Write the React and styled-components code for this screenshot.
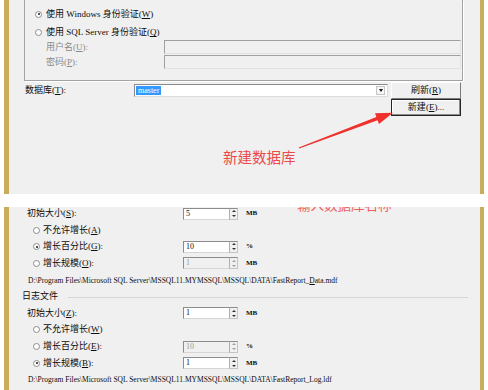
import React from 'react';
import styled, { createGlobalStyle } from 'styled-components';

const GOLD = '#c9ad5e';
const PANEL = '#f0f0f0';
const FONT = `"Liberation Serif", "Noto Sans CJK SC", serif`;
const CJK = `"Noto Sans CJK SC", sans-serif`;
const NOTE = '#ec4a4a';

const GlobalStyle = createGlobalStyle`
  html, body {
    margin: 0;
    padding: 0;
    background: #fff;
  }
  body {
    font-family: ${FONT};
    text-autospace: no-autospace;
  }
`;

const Page = styled.div`
  width: 488px;
  height: 390px;
  overflow: hidden;
  display: flex;
  flex-direction: column;
`;

const Shot = styled.div`
  position: relative;
  flex-shrink: 0;
  box-sizing: border-box;
  height: ${p => p.$h}px;
  margin: 0 4px;
  padding: ${p => p.$pad};
  background: ${PANEL};
  border-left: 5px solid ${GOLD};
  border-right: 4px solid ${GOLD};
  font-family: ${FONT};
  font-size: 9px;
  color: #0c0c0c;
  overflow: hidden;
`;

const Gap = styled.div`
  height: 13px;
  flex-shrink: 0;
`;

/* ---------- top dialog ---------- */

const GroupBox = styled.div`
  box-sizing: border-box;
  height: 81px;
  padding: 7px 1px 0 10px;
  border: 1px solid #a3a3a3;
  border-top: none;
  box-shadow: 1px 1px 0 #fff;
  display: flex;
  flex-direction: column;
`;

const OptionRow = styled.div`
  display: flex;
  align-items: center;
  gap: ${p => p.$gap ?? 4}px;
  height: 14px;
  line-height: 14px;
  margin-top: ${p => p.$mt || 0}px;
  padding-left: ${p => p.$indent || 0}px;
  white-space: nowrap;
`;

const RadioDot = styled.span`
  position: relative;
  flex-shrink: 0;
  box-sizing: border-box;
  width: 7px;
  height: 7px;
  border-radius: 50%;
  border: 1px solid #8d8d8d;
  background: #fff;

  &::after {
    content: '';
    display: ${p => (p.$on ? 'block' : 'none')};
    position: absolute;
    left: 1.5px;
    top: 1.5px;
    width: 2px;
    height: 2px;
    border-radius: 50%;
    background: #1a1a1a;
  }
`;

const FieldLabel = styled.span`
  flex-shrink: 0;
  width: ${p => p.$w}px;
  color: ${p => (p.$dim ? '#8a8a8a' : 'inherit')};
`;

const DisabledBox = styled.div`
  flex: 1;
  box-sizing: border-box;
  height: 14px;
  border: 1px solid;
  border-color: #a0a0a0 #e2e2e2 #e2e2e2 #a0a0a0;
  background: ${PANEL};
`;

const DbRow = styled.div`
  display: flex;
  align-items: flex-start;
  margin-top: 1px;
  padding-left: 1px;
`;

const DbLabel = styled.span`
  width: 109px;
  height: 17px;
  line-height: 17px;
  flex-shrink: 0;
`;

const Combo = styled.div`
  box-sizing: border-box;
  width: 254px;
  height: 13px;
  margin-top: 2px;
  padding: 0 1px;
  display: flex;
  align-items: center;
  background: #fff;
  border: 1px solid;
  border-color: #8a8a8a #dcdcdc #dcdcdc #8a8a8a;
`;

const Selected = styled.span`
  height: 9px;
  line-height: 9px;
  padding: 0 2px;
  background: #3399ff;
  color: #fff;
  font-size: 8px;
`;

const DropButton = styled.span`
  margin-left: auto;
  margin-right: 1px;
  box-sizing: border-box;
  width: 9px;
  height: 9px;
  border: 1px solid #c4c4c4;
  background: #f6f6f6;
  display: flex;
  align-items: center;
  justify-content: center;

  &::after {
    content: '';
    border-left: 2.5px solid transparent;
    border-right: 2.5px solid transparent;
    border-top: 3px solid #111;
  }
`;

const ButtonColumn = styled.div`
  display: flex;
  flex-direction: column;
  width: 70px;
  margin-left: 3px;
`;

const Button = styled.div`
  box-sizing: border-box;
  height: 17px;
  line-height: 15px;
  text-align: center;
  background: ${PANEL};
  border: 1px solid;
  border-color: ${p => (p.$default ? '#262626' : '#fff #7a7a7a #7a7a7a #fff')};
  box-shadow: ${p => (p.$default ? 'inset -1px -1px 0 #8a8a8a, inset 1px 1px 0 #fff' : 'none')};
  font-size: 9px;
  white-space: nowrap;
`;

const Annotation = styled.div`
  position: absolute;
  left: ${p => p.$x}px;
  top: ${p => p.$y}px;
  font-family: ${CJK};
  font-size: ${p => p.$size}px;
  line-height: 1;
  color: ${p => p.$color || NOTE};
  white-space: nowrap;
`;

const ArrowMark = styled.svg`
  position: absolute;
  left: 281px;
  top: 105px;
`;

/* ---------- bottom dialog ---------- */

const Form = styled.div`
  display: flex;
  flex-direction: column;
  gap: 3.65px;
`;

const FormRow = styled.div`
  display: flex;
  align-items: center;
  height: 13px;
  line-height: 13px;
  padding-left: ${p => p.$indent || 0}px;
  white-space: nowrap;
`;

const RadioLabel = styled.span`
  display: flex;
  align-items: center;
  gap: 3px;
  flex-shrink: 0;
  width: ${p => p.$w}px;
`;

const NumberBox = styled.div`
  box-sizing: border-box;
  width: 46px;
  height: 12px;
  padding-left: 2px;
  line-height: 10px;
  font-size: 8px;
  background: ${p => (p.$disabled ? PANEL : '#fff')};
  color: ${p => (p.$disabled ? '#9a9a9a' : '#111')};
  border: 1px solid;
  border-color: #8c8c8c #d6d6d6 #d6d6d6 #8c8c8c;
  border-right: none;
`;

const Spinner = styled.div`
  box-sizing: border-box;
  width: 9px;
  height: 12px;
  display: flex;
  flex-direction: column;
  align-items: center;
  justify-content: space-around;
  background: ${PANEL};
  border: 1px solid;
  border-color: #8c8c8c #c4c4c4 #c4c4c4 #b0b0b0;
`;

const Tri = styled.span`
  border-left: 2px solid transparent;
  border-right: 2px solid transparent;
  ${p => (p.$up ? 'border-bottom' : 'border-top')}: 2px solid ${p => (p.$dim ? '#a0a0a0' : '#333')};
`;

const Unit = styled.span`
  margin-left: 8px;
  font-size: 7px;
  font-weight: bold;
`;

const PathText = styled.div`
  height: 13px;
  line-height: 13px;
  padding-left: 6px;
  font-size: 7.5px;
  white-space: nowrap;
`;

const SectionHeader = styled.div`
  display: flex;
  align-items: center;
  height: 13px;
  line-height: 13px;
  font-size: 9px;

  &::after {
    content: '';
    flex: 1;
    height: 1px;
    margin: 1px 12px 0 10px;
    background: #d6d6d6;
  }
`;

const Key = ({ k }) => (
  <>
    (<u>{k}</u>)
  </>
);

const Spin = ({ value, disabled, unit }) => (
  <>
    <NumberBox $disabled={disabled}>{value}</NumberBox>
    <Spinner>
      <Tri $up $dim={disabled} />
      <Tri $dim={disabled} />
    </Spinner>
    <Unit>{unit}</Unit>
  </>
);

const GrowthRows = ({ keys, values, checked, disabled }) => (
  <>
    <FormRow $indent={5}>
      <FieldLabel $w={156}>
        初始大小<Key k={keys[0]} />:
      </FieldLabel>
      <Spin value={values[0]} unit="MB" />
    </FormRow>
    <FormRow $indent={11}>
      <RadioLabel $w={150}>
        <RadioDot $on={checked === 0} />
        <span>
          不允许增长<Key k={keys[1]} />
        </span>
      </RadioLabel>
    </FormRow>
    <FormRow $indent={11}>
      <RadioLabel $w={150}>
        <RadioDot $on={checked === 1} />
        <span>
          增长百分比<Key k={keys[2]} />:
        </span>
      </RadioLabel>
      <Spin value={values[1]} unit="%" disabled={disabled === 1} />
    </FormRow>
    <FormRow $indent={11}>
      <RadioLabel $w={150}>
        <RadioDot $on={checked === 2} />
        <span>
          增长规模<Key k={keys[3]} />:
        </span>
      </RadioLabel>
      <Spin value={values[2]} unit="MB" disabled={disabled === 2} />
    </FormRow>
  </>
);

export default function App() {
  return (
    <Page>
      <GlobalStyle />

      <Shot $h={194} $pad="0 17px 0 15px">
        <GroupBox>
          <OptionRow>
            <RadioDot $on />
            <span>
              使用 Windows 身份验证<Key k="W" />
            </span>
          </OptionRow>
          <OptionRow $mt={4}>
            <RadioDot />
            <span>
              使用 SQL Server 身份验证<Key k="Q" />
            </span>
          </OptionRow>
          <OptionRow $mt={1} $indent={11} $gap={0}>
            <FieldLabel $w={118} $dim>
              用户名<Key k="U" />:
            </FieldLabel>
            <DisabledBox />
          </OptionRow>
          <OptionRow $mt={1} $indent={11} $gap={0}>
            <FieldLabel $w={118} $dim>
              密码<Key k="P" />:
            </FieldLabel>
            <DisabledBox />
          </OptionRow>
        </GroupBox>

        <DbRow>
          <DbLabel>
            数据库<Key k="T" />:
          </DbLabel>
          <Combo>
            <Selected>master</Selected>
            <DropButton />
          </Combo>
          <ButtonColumn>
            <Button>
              刷新<Key k="R" />
            </Button>
            <Button $default>
              新建<Key k="E" />...
            </Button>
          </ButtonColumn>
        </DbRow>

        <Annotation $x={214} $y={150} $size={14.5}>
          新建数据库
        </Annotation>
        <ArrowMark width="115" height="50" viewBox="0 0 115 50">
          <polygon
            points="8.8,42.4 86.4,12.1 85,8.2 103,7.8 89,19 87.6,15.2 9.2,43.6"
            fill="#f0302b"
          />
        </ArrowMark>
      </Shot>

      <Gap />

      <Shot $h={183} $pad="0 0 0 13px">
        <Annotation $x={288} $y={-9} $size={13.5} $color="#ee6060">
          输入数据库名称
        </Annotation>
        <Form>
          <GrowthRows keys={['S', 'A', 'G', 'O']} values={['5', '10', '1']} checked={1} disabled={2} />
          <PathText>
            D:\Program Files\Microsoft SQL Server\MSSQL11.MYMSSQL\MSSQL\DATA\FastReport_<u>D</u>ata.mdf
          </PathText>
          <SectionHeader>日志文件</SectionHeader>
          <GrowthRows keys={['Z', 'W', 'E', 'B']} values={['1', '10', '1']} checked={2} disabled={1} />
          <PathText>
            D:\Program Files\Microsoft SQL Server\MSSQL11.MYMSSQL\MSSQL\DATA\FastReport_Log.ldf
          </PathText>
        </Form>
      </Shot>
    </Page>
  );
}
